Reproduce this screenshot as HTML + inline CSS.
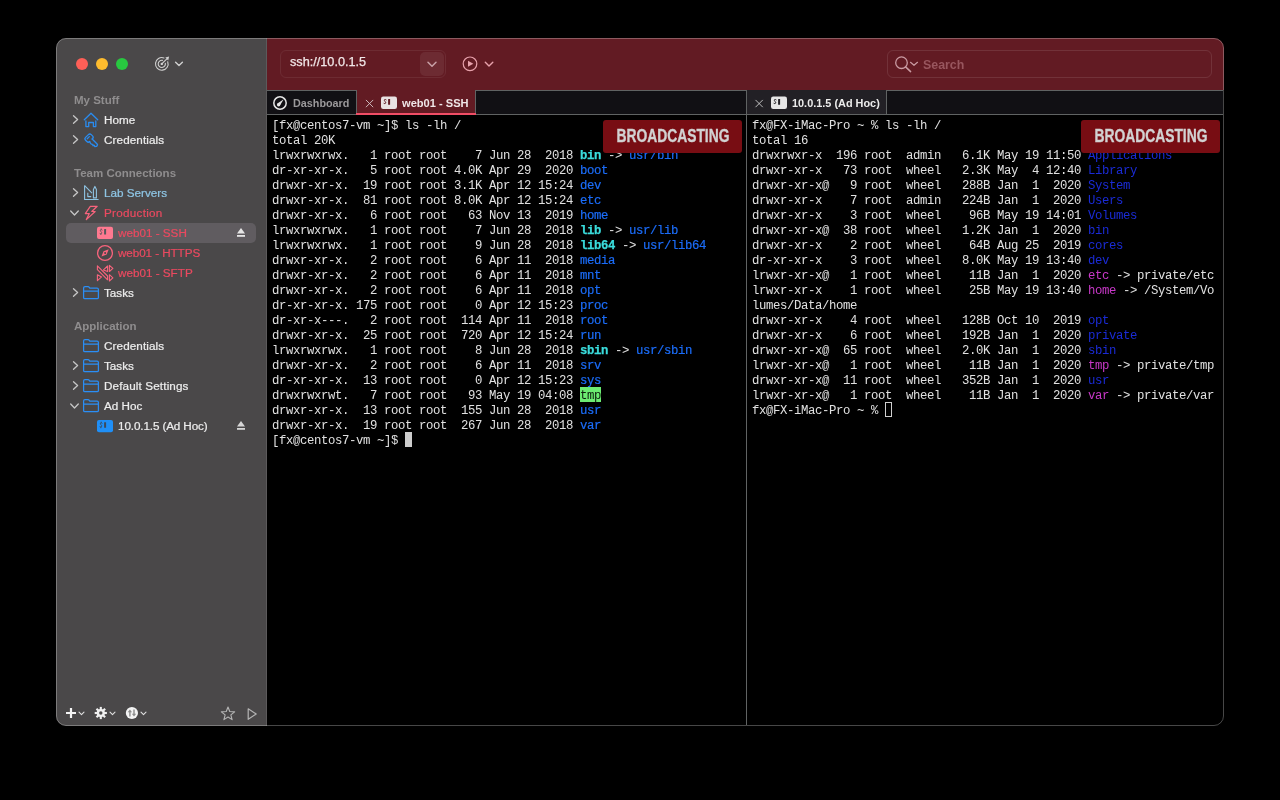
<!DOCTYPE html>
<html><head><meta charset="utf-8">
<style>
*{margin:0;padding:0;box-sizing:border-box}
html,body{-webkit-font-smoothing:antialiased;width:1280px;height:800px;background:#000;overflow:hidden;font-family:"Liberation Sans",sans-serif}
.a{position:absolute}
#win{position:absolute;left:56px;top:38px;width:1168px;height:688px;border-radius:10px;overflow:hidden;background:#000}
#winb{position:absolute;left:56px;top:38px;width:1168px;height:688px;border-radius:10px;border:1px solid rgba(255,255,255,0.28);pointer-events:none}
#side{position:absolute;left:0;top:0;width:210px;height:688px;background:#4a4849}
#sideline{position:absolute;left:210px;top:0;width:1px;height:688px;background:#5c5a5b}
#hdr{position:absolute;left:211px;top:0;width:957px;height:52px;background:#621b23}
.st{font-size:11.7px;color:#ececec;white-space:nowrap;-webkit-text-stroke-width:0.22px}
.sh{font-size:11.5px;font-weight:bold;color:#8f8d8e;white-space:nowrap}
.pk{color:#ea4a60}
.lb{color:#8ec5e4}
.term{position:absolute;z-index:0;font-family:"Liberation Mono",monospace;font-size:12.3px;letter-spacing:-0.38px;line-height:15px;color:#e0e0e0;white-space:pre}
.term .bl{color:#1b6cf8;-webkit-text-stroke-width:0.2px}
.term .cy{color:#3adcdc;-webkit-text-stroke-width:0.25px}
.term .tmp{position:relative;color:#0b1a0b}
.term .tmp::before{content:"";position:absolute;left:0;right:0;top:-2px;height:15px;background:#6cec72;z-index:-1}
.term .db{color:#1a2bd6}
.term .mg{color:#c838c8}
.cur{display:inline-block;width:7px;height:15px;background:#cdcdcd;vertical-align:top;position:relative;top:-2px}
.cur2{display:inline-block;width:7px;height:15px;border:1px solid #d0d0d0;vertical-align:top;position:relative;top:-2px}
.broad{position:absolute;width:139px;height:33px;border-radius:3px;background:rgba(128,14,20,0.94)}
.broad span{position:absolute;left:-40.5px;top:0;width:220px;-webkit-text-stroke:0.35px #d2d2d2;text-align:center;font-weight:bold;font-size:18.2px;line-height:32px;color:#d2d2d2;transform:scaleX(0.76);transform-origin:50% 50%}
.tab{position:absolute;font-size:11.4px;white-space:nowrap}
svg{position:absolute;overflow:visible}
</style></head><body><div id="root" style="position:absolute;left:0;top:0;width:1280px;height:800px;will-change:transform">
<div id="win">
  <div id="side"></div>
  <div id="sideline"></div>
  <div id="hdr"></div>
</div>

<!-- traffic lights -->
<div class="a" style="left:76px;top:58px;width:12px;height:12px;border-radius:6px;background:#fe5f57"></div>
<div class="a" style="left:96px;top:58px;width:12px;height:12px;border-radius:6px;background:#febc2e"></div>
<div class="a" style="left:116px;top:58px;width:12px;height:12px;border-radius:6px;background:#28c840"></div>

<!-- sidebar -->
<div class="a sh" style="left:74px;top:94px">My Stuff</div>
<div class="a st" style="left:104px;top:113px">Home</div>
<div class="a st" style="left:104px;top:133px;letter-spacing:0.1px">Credentials</div>
<div class="a sh" style="left:74px;top:167px">Team Connections</div>
<div class="a st lb" style="left:104px;top:186px">Lab Servers</div>
<div class="a st pk" style="left:104px;top:206px;letter-spacing:0.27px">Production</div>
<div class="a" style="left:66px;top:223px;width:190px;height:20px;border-radius:5px;background:#605c60"></div>
<div class="a st pk" style="left:118px;top:226px">web01 - SSH</div>
<div class="a st pk" style="left:118px;top:246px;letter-spacing:-0.08px">web01 - HTTPS</div>
<div class="a st pk" style="left:118px;top:266px">web01 - SFTP</div>
<div class="a st" style="left:104px;top:286px">Tasks</div>
<div class="a sh" style="left:74px;top:320px">Application</div>
<div class="a st" style="left:104px;top:339px;letter-spacing:0.1px">Credentials</div>
<div class="a st" style="left:104px;top:359px">Tasks</div>
<div class="a st" style="left:104px;top:379px;letter-spacing:0.13px">Default Settings</div>
<div class="a st" style="left:104px;top:399px">Ad Hoc</div>
<div class="a st" style="left:118px;top:419px;letter-spacing:-0.12px">10.0.1.5 (Ad Hoc)</div>

<!-- header -->
<div class="a" style="left:280px;top:50px;width:166px;height:28px;border-radius:6px;border:1px solid rgba(255,255,255,0.07)"></div>
<div class="a" style="left:420px;top:52px;width:24px;height:24px;border-radius:5px;background:rgba(255,255,255,0.07)"></div>
<div class="a" style="left:290px;top:55px;font-size:12.7px;color:#f0e6e7;white-space:nowrap;-webkit-text-stroke:0.25px #f0e6e7">ssh://10.0.1.5</div>
<div class="a" style="left:887px;top:50px;width:325px;height:28px;border-radius:6px;border:1px solid rgba(255,255,255,0.1)"></div>
<div class="a" style="left:923px;top:58px;font-size:12.4px;font-weight:bold;color:#98565e;white-space:nowrap">Search</div>

<!-- tabs -->
<div class="a" style="left:267px;top:90px;width:956px;height:1px;background:#606363"></div>
<div class="a" style="left:267px;top:91px;width:89px;height:23px;background:#111014"></div>
<div class="a" style="left:356px;top:90px;width:1px;height:24px;background:#606363"></div>
<div class="a" style="left:357px;top:90px;width:118px;height:24px;background:#621b23"></div>
<div class="a" style="left:475px;top:90px;width:1px;height:24px;background:#606363"></div>
<div class="a" style="left:476px;top:91px;width:270px;height:23px;background:#111014"></div>
<div class="a" style="left:747px;top:90px;width:139px;height:24px;background:#222025"></div>
<div class="a" style="left:886px;top:90px;width:1px;height:24px;background:#606363"></div>
<div class="a" style="left:887px;top:91px;width:336px;height:23px;background:#111014"></div>
<div class="a" style="left:267px;top:114px;width:956px;height:1px;background:#606363"></div>
<div class="a" style="left:746px;top:90px;width:1px;height:635px;background:#606363"></div>
<div class="a" style="left:356px;top:113px;width:120px;height:2px;background:#f04d66"></div>
<div class="tab" style="left:293px;top:97px;color:#9b999b;font-weight:bold;font-size:10.8px">Dashboard</div>
<div class="tab" style="left:402px;top:97px;color:#efe6e7;font-weight:bold;font-size:11.1px">web01 - SSH</div>
<div class="tab" style="left:792px;top:97px;color:#ececec;font-weight:bold;font-size:10.9px">10.0.1.5 (Ad Hoc)</div>

<!-- terminals -->
<div class="term" style="left:272px;top:119px">[fx@centos7-vm ~]$ ls -lh /
total 20K
lrwxrwxrwx.   1 root root    7 Jun 28  2018 <b class="cy">bin</b> -&gt; <span class="bl">usr/bin</span>
dr-xr-xr-x.   5 root root 4.0K Apr 29  2020 <span class="bl">boot</span>
drwxr-xr-x.  19 root root 3.1K Apr 12 15:24 <span class="bl">dev</span>
drwxr-xr-x.  81 root root 8.0K Apr 12 15:24 <span class="bl">etc</span>
drwxr-xr-x.   6 root root   63 Nov 13  2019 <span class="bl">home</span>
lrwxrwxrwx.   1 root root    7 Jun 28  2018 <b class="cy">lib</b> -&gt; <span class="bl">usr/lib</span>
lrwxrwxrwx.   1 root root    9 Jun 28  2018 <b class="cy">lib64</b> -&gt; <span class="bl">usr/lib64</span>
drwxr-xr-x.   2 root root    6 Apr 11  2018 <span class="bl">media</span>
drwxr-xr-x.   2 root root    6 Apr 11  2018 <span class="bl">mnt</span>
drwxr-xr-x.   2 root root    6 Apr 11  2018 <span class="bl">opt</span>
dr-xr-xr-x. 175 root root    0 Apr 12 15:23 <span class="bl">proc</span>
dr-xr-x---.   2 root root  114 Apr 11  2018 <span class="bl">root</span>
drwxr-xr-x.  25 root root  720 Apr 12 15:24 <span class="bl">run</span>
lrwxrwxrwx.   1 root root    8 Jun 28  2018 <b class="cy">sbin</b> -&gt; <span class="bl">usr/sbin</span>
drwxr-xr-x.   2 root root    6 Apr 11  2018 <span class="bl">srv</span>
dr-xr-xr-x.  13 root root    0 Apr 12 15:23 <span class="bl">sys</span>
drwxrwxrwt.   7 root root   93 May 19 04:08 <span class="tmp">tmp</span>
drwxr-xr-x.  13 root root  155 Jun 28  2018 <span class="bl">usr</span>
drwxr-xr-x.  19 root root  267 Jun 28  2018 <span class="bl">var</span>
[fx@centos7-vm ~]$ <span class="cur"></span></div>
<div class="term" style="left:752px;top:119px">fx@FX-iMac-Pro ~ % ls -lh /
total 16
drwxrwxr-x  196 root  admin   6.1K May 19 11:50 <span class="db">Applications</span>
drwxr-xr-x   73 root  wheel   2.3K May  4 12:40 <span class="db">Library</span>
drwxr-xr-x@   9 root  wheel   288B Jan  1  2020 <span class="db">System</span>
drwxr-xr-x    7 root  admin   224B Jan  1  2020 <span class="db">Users</span>
drwxr-xr-x    3 root  wheel    96B May 19 14:01 <span class="db">Volumes</span>
drwxr-xr-x@  38 root  wheel   1.2K Jan  1  2020 <span class="db">bin</span>
drwxr-xr-x    2 root  wheel    64B Aug 25  2019 <span class="db">cores</span>
dr-xr-xr-x    3 root  wheel   8.0K May 19 13:40 <span class="db">dev</span>
lrwxr-xr-x@   1 root  wheel    11B Jan  1  2020 <span class="mg">etc</span> -&gt; private/etc
lrwxr-xr-x    1 root  wheel    25B May 19 13:40 <span class="mg">home</span> -&gt; /System/Vo
lumes/Data/home
drwxr-xr-x    4 root  wheel   128B Oct 10  2019 <span class="db">opt</span>
drwxr-xr-x    6 root  wheel   192B Jan  1  2020 <span class="db">private</span>
drwxr-xr-x@  65 root  wheel   2.0K Jan  1  2020 <span class="db">sbin</span>
lrwxr-xr-x@   1 root  wheel    11B Jan  1  2020 <span class="mg">tmp</span> -&gt; private/tmp
drwxr-xr-x@  11 root  wheel   352B Jan  1  2020 <span class="db">usr</span>
lrwxr-xr-x@   1 root  wheel    11B Jan  1  2020 <span class="mg">var</span> -&gt; private/var
fx@FX-iMac-Pro ~ % <span class="cur2"></span></div>
<div class="broad" style="left:603px;top:120px"><span>BROADCASTING</span></div>
<div class="broad" style="left:1081px;top:120px"><span>BROADCASTING</span></div>

<!-- sidebar header target icon -->
<svg width="20" height="20" style="left:152px;top:54px" viewBox="152 54 20 20">
 <g fill="none" stroke="#d0d0d0" stroke-width="1.1" stroke-linecap="round">
  <path d="M167.72 61.75 A6.3 6.3 0 1 1 163.95 57.98"/>
  <path d="M165.35 63.27 A3.6 3.6 0 1 1 162.43 60.35"/>
  <path d="M161.8 63.9 L166.6 59.1"/>
 </g>
 <circle cx="161.8" cy="63.9" r="1.2" fill="#d0d0d0"/>
 <path d="M165.3 57.6 L169.1 56.6 L168.2 60.4 Z" fill="#d0d0d0"/>
</svg>
<svg width="10" height="6" style="left:175px;top:61px" viewBox="175 61 10 6"><path d="M175.6 62.3 L179 65.6 L182.4 62.3" fill="none" stroke="#d0d0d0" stroke-width="1.4" stroke-linecap="round" stroke-linejoin="round"/></svg>

<!-- chevrons right -->
<svg width="200" height="400" style="left:60px;top:100px" viewBox="60 100 200 400">
 <g fill="none" stroke="#c6c6c6" stroke-width="1.3" stroke-linecap="round" stroke-linejoin="round">
  <path d="M73.5 115.7 L77.6 119.5 L73.5 123.3"/>
  <path d="M73.5 135.7 L77.6 139.5 L73.5 143.3"/>
  <path d="M73.5 188.7 L77.6 192.5 L73.5 196.3"/>
  <path d="M70.7 211 L74.5 215 L78.3 211"/>
  <path d="M73.5 288.7 L77.6 292.5 L73.5 296.3"/>
  <path d="M73.5 361.7 L77.6 365.5 L73.5 369.3"/>
  <path d="M73.5 381.7 L77.6 385.5 L73.5 389.3"/>
  <path d="M70.7 404 L74.5 408 L78.3 404"/>
 </g>
 <!-- home -->
 <g fill="none" stroke="#2a8cf0" stroke-width="1.3" stroke-linecap="round" stroke-linejoin="round">
  <path d="M84.3 119.8 L91 113.3 L97.7 119.8"/>
  <path d="M85.9 121 L85.9 126.6 L88.7 126.6 L88.7 122.5 L93.4 122.5 L93.4 126.6 L95.8 126.6 L95.8 121"/>
 </g>
 <!-- key -->
 <g fill="none" stroke="#2a8cf0" stroke-width="1.3" stroke-linejoin="round" stroke-linecap="round" transform="translate(87 136) rotate(45)">
  <path d="M5.8 -1.5 V-2 A2 2 0 0 0 3.8 -4 H2 A2 2 0 0 0 0 -2 V2 A2 2 0 0 0 2 4 H3.8 A2 2 0 0 0 5.8 2 V2.2"/>
  <path d="M5.8 -1.5 H12.8 Q14 -1.5 14 -0.3 V0.8 L13 2 L12 1.4 L11 2.6 L10 1.8 L8.8 2.7 L7.5 2.6 L5.8 2.2"/>
  <path d="M2.1 -1.2 V1.8"/>
 </g>
<!-- lab servers -->
 <g fill="none" stroke="#8ec3e2" stroke-width="1.1" stroke-linejoin="round">
  <path d="M84.6 185.6 L84.6 199.5 L98.6 199.5"/>
  <path d="M84.6 185.6 L92 193.2"/>
  <path d="M87.8 192.8 L87.8 196.6 L91.2 196.6"/>
  <path d="M93.4 197.9 V189.6 L94.9 186.4 L96.4 189.6 V197.9 Z"/>
 </g>
 <!-- production bolt -->
 <path d="M90.3 206.3 L97.2 206.3 L91.8 211.5 L95.2 211.5 L86.3 219.6 L89.3 213.6 L85.3 213.6 Z" fill="none" stroke="#f8647d" stroke-width="1.2" stroke-linejoin="round"/>
 <!-- ssh box -->
 <rect x="97" y="226.8" width="16" height="12.3" rx="2" fill="#ff7990"/>
 <path d="M102.1 230.0 Q101.2 229.3 100.5 229.9 Q100 230.60000000000002 100.9 231.5 Q102.1 232.4 101.6 233.4 Q101 234.20000000000002 100 233.60000000000002 M101.2 228.9 V229.4 M100.9 234.10000000000002 V234.60000000000002" fill="none" stroke="#58575b" stroke-width="0.9" stroke-linecap="round"/>
 <rect x="104.1" y="229.10000000000002" width="2" height="5.5" rx="0.3" fill="#58575b"/>
<!-- compass -->
 <circle cx="105" cy="253" r="7.4" fill="none" stroke="#f8647d" stroke-width="1.3"/>
 <path d="M101.5 256.5 L103.5 251.3 L108.7 249.3 L106.7 254.5 Z" fill="#f8647d"/>
 <circle cx="105.1" cy="252.9" r="1" fill="#4a4849"/>
 <!-- sftp -->
 <g fill="none" stroke="#f8647d" stroke-width="1.1" stroke-linejoin="round">
  <path d="M97.4 265.9 L107.6 276 L107.6 279.8 L97.4 269.7 Z"/>
  <path d="M97.4 274.8 L101.6 276.9 L97.4 280.6 Z"/>
  <path d="M103.5 269.9 L107.6 266 L107.6 271.6 Z"/>
  <path d="M109.4 265.3 L112.9 268.4 L109.4 271.5 Z"/>
  <path d="M109.4 274.7 L112.9 277.9 L109.4 281 Z"/>
 </g>
<!-- folders -->
 <g fill="none" stroke="#2b8ef5" stroke-width="1.25" stroke-linejoin="round">
  <path d="M83.6 297.6 V288.0 Q83.6 286.6 85 286.6 H88 Q88.8 286.6 89.3 287.3 L89.8 288.2 H97.1 Q98.4 288.2 98.4 289.5 V297.4 Q98.4 298.7 97.1 298.7 H84.9 Q83.6 298.7 83.6 297.4 Z M83.6 291.0 H98.4"/>
  <path d="M83.6 350.6 V341.0 Q83.6 339.6 85 339.6 H88 Q88.8 339.6 89.3 340.3 L89.8 341.2 H97.1 Q98.4 341.2 98.4 342.5 V350.4 Q98.4 351.7 97.1 351.7 H84.9 Q83.6 351.7 83.6 350.4 Z M83.6 344.0 H98.4"/>
  <path d="M83.6 370.6 V361.0 Q83.6 359.6 85 359.6 H88 Q88.8 359.6 89.3 360.3 L89.8 361.2 H97.1 Q98.4 361.2 98.4 362.5 V370.4 Q98.4 371.7 97.1 371.7 H84.9 Q83.6 371.7 83.6 370.4 Z M83.6 364.0 H98.4"/>
  <path d="M83.6 390.6 V381.0 Q83.6 379.6 85 379.6 H88 Q88.8 379.6 89.3 380.3 L89.8 381.2 H97.1 Q98.4 381.2 98.4 382.5 V390.4 Q98.4 391.7 97.1 391.7 H84.9 Q83.6 391.7 83.6 390.4 Z M83.6 384.0 H98.4"/>
  <path d="M83.6 410.6 V401.0 Q83.6 399.6 85 399.6 H88 Q88.8 399.6 89.3 400.3 L89.8 401.2 H97.1 Q98.4 401.2 98.4 402.5 V410.4 Q98.4 411.7 97.1 411.7 H84.9 Q83.6 411.7 83.6 410.4 Z M83.6 404.0 H98.4"/>
 </g>
 <!-- adhoc box -->
 <rect x="97" y="420" width="16" height="12.3" rx="2" fill="#1f8ff7"/>
 <path d="M102.1 423.2 Q101.2 422.5 100.5 423.1 Q100 423.8 100.9 424.7 Q102.1 425.6 101.6 426.6 Q101 427.4 100 426.8 M101.2 422.1 V422.6 M100.9 427.3 V427.8" fill="none" stroke="#3d4a5a" stroke-width="0.9" stroke-linecap="round"/>
 <rect x="104.1" y="422.3" width="2" height="5.5" rx="0.3" fill="#3d4a5a"/>
<!-- eject -->
 <path d="M237 233.5 L241 228 L245 233.5 Z" fill="#e6e6e6"/>
 <rect x="237" y="235" width="8" height="1.8" fill="#e6e6e6"/>
 <path d="M237 426.5 L241 421 L245 426.5 Z" fill="#d6d6d6"/>
 <rect x="237" y="428" width="8" height="1.8" fill="#d6d6d6"/>
</svg>

<!-- bottom toolbar -->
<svg width="210" height="30" style="left:56px;top:698px" viewBox="56 698 210 30">
 <g fill="none" stroke="#f4f4f4" stroke-width="2.2" stroke-linecap="butt">
  <path d="M71 708 V718 M66 713 H76"/>
 </g>
 <g fill="none" stroke="#e0e0e0" stroke-width="1.1" stroke-linecap="round" stroke-linejoin="round">
  <path d="M79 712.2 L81.5 714.7 L84 712.2"/>
  <path d="M110 712.2 L112.5 714.7 L115 712.2"/>
  <path d="M141 712.2 L143.5 714.7 L146 712.2"/>
 </g>
 <!-- gear -->
 <g fill="#f0f0f0">
  <circle cx="100.8" cy="713" r="4.1"/>
  <g id="teeth">
   <rect x="99.75" y="706.9" width="2.1" height="12.2"/>
   <rect x="99.75" y="706.9" width="2.1" height="12.2" transform="rotate(45 100.8 713)"/>
   <rect x="99.75" y="706.9" width="2.1" height="12.2" transform="rotate(90 100.8 713)"/>
   <rect x="99.75" y="706.9" width="2.1" height="12.2" transform="rotate(135 100.8 713)"/>
  </g>
 </g>
 <circle cx="100.8" cy="713" r="1.7" fill="#4a4849"/>
 <!-- sync -->
 <circle cx="131.9" cy="713" r="6.1" fill="#f4f4f4"/>
 <path d="M129.9 716.6 V711" fill="none" stroke="#8c8c8c" stroke-width="1.4"/>
 <path d="M127.7 712.2 L129.9 709.6 L132.1 712.2 Z" fill="#8c8c8c"/>
 <path d="M134 709.4 V715" fill="none" stroke="#8c8c8c" stroke-width="1.4"/>
 <path d="M131.8 713.8 L134 716.4 L136.2 713.8 Z" fill="#8c8c8c"/>
 <!-- star -->
 <path d="M228.00 707.00 L229.76 711.57 L234.66 711.84 L230.85 714.93 L232.11 719.66 L228.00 717.00 L223.89 719.66 L225.15 714.93 L221.34 711.84 L226.24 711.57 Z" fill="none" stroke="#b4b4b4" stroke-width="1.1" stroke-linejoin="round"/>
 <!-- play -->
 <path d="M248.2 708.8 L256.2 714 L248.2 719.3 Z" fill="none" stroke="#b4b4b4" stroke-width="1.2" stroke-linejoin="round"/>
</svg>

<!-- header icons -->
<svg width="960" height="80" style="left:260px;top:40px" viewBox="260 40 960 80">
 <path d="M428 62.3 L432 66.2 L436 62.3" fill="none" stroke="#c9a2a8" stroke-width="1.5" stroke-linecap="round" stroke-linejoin="round"/>
 <circle cx="470" cy="63.8" r="6.8" fill="none" stroke="#e8a2ac" stroke-width="1.2"/>
 <path d="M468 60.8 L473.3 63.8 L468 66.8 Z" fill="#e8a2ac"/>
 <path d="M485.3 62.3 L489 66 L492.8 62.3" fill="none" stroke="#e8a2ac" stroke-width="1.4" stroke-linecap="round" stroke-linejoin="round"/>
 <!-- search -->
 <circle cx="901.5" cy="62.7" r="5.8" fill="none" stroke="#c99ba2" stroke-width="1.3"/>
 <path d="M905.6 66.9 L910.6 71.6" fill="none" stroke="#c99ba2" stroke-width="1.5" stroke-linecap="round"/>
 <path d="M910.5 62.3 L914 65.3 L917.5 62.3" fill="none" stroke="#c99ba2" stroke-width="1.2" stroke-linecap="round" stroke-linejoin="round"/>
 <!-- dashboard gauge -->
 <circle cx="280" cy="103" r="6.2" fill="none" stroke="#e6e6e6" stroke-width="1.5"/>
 <path d="M283.7 99.2 L279.8 105.8 L277.4 103.6 Z" fill="#e6e6e6"/>
 <circle cx="278.6" cy="104.7" r="1.7" fill="#e6e6e6"/>
 <!-- close x left -->
 <path d="M366.2 100.2 L372.9 106.9 M372.9 100.2 L366.2 106.9" stroke="#d6c6c8" stroke-width="0.9" stroke-linecap="round"/>
 <rect x="381" y="96.5" width="16" height="12.5" rx="2.2" fill="#e9e1e2"/>
 <path d="M386.1 99.8 Q385.2 99.1 384.5 99.7 Q384 100.4 384.9 101.3 Q386.1 102.2 385.6 103.2 Q385 104.0 384 103.4" fill="none" stroke="#5e1a22" stroke-width="1" stroke-linecap="round"/>
 <rect x="388.1" y="99.1" width="2" height="5.7" rx="0.3" fill="#5e1a22"/>
 <!-- right tab -->
 <path d="M755.8 100.2 L762.5 106.9 M762.5 100.2 L755.8 106.9" stroke="#cfcfcf" stroke-width="0.9" stroke-linecap="round"/>
 <rect x="771" y="96.5" width="16" height="12.5" rx="2.2" fill="#e6e6e6"/>
 <path d="M776.1 99.8 Q775.2 99.1 774.5 99.7 Q774 100.4 774.9 101.3 Q776.1 102.2 775.6 103.2 Q775 104.0 774 103.4" fill="none" stroke="#222025" stroke-width="1" stroke-linecap="round"/>
 <rect x="778.1" y="99.1" width="2" height="5.7" rx="0.3" fill="#222025"/>
</svg>


<div id="winb"></div>
</div></body></html>
